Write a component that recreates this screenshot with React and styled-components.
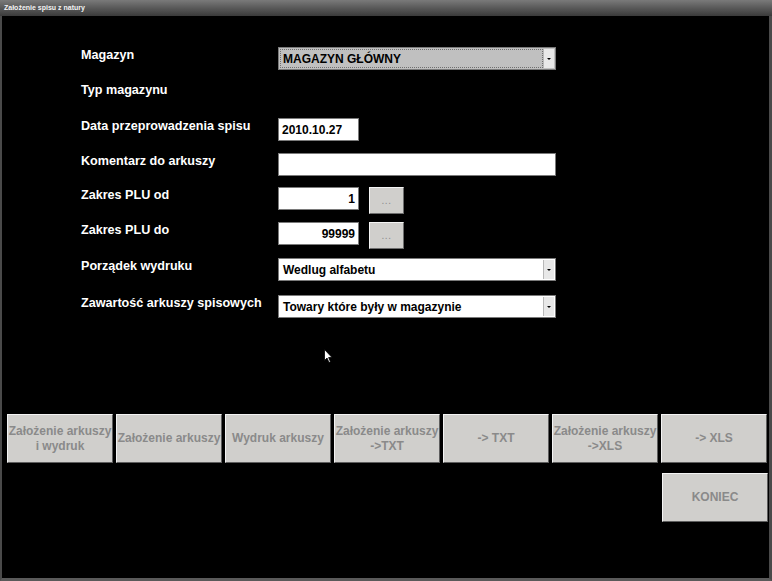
import React from "react";
import styled, { createGlobalStyle } from "styled-components";

const Global = createGlobalStyle`
  html, body { margin: 0; padding: 0; background: #000; }
  body { font-family: "Liberation Sans", Arial, sans-serif; }
  * { box-sizing: border-box; }
`;

const Window = styled.div`
  position: relative;
  width: 772px;
  height: 581px;
  background: #000;
  border-left: 2px solid #4a4a4a;
  border-right: 3px solid #4a4a4a;
  border-bottom: 3px solid #5a5a5a;
  display: flex;
  flex-direction: column;
`;

const TitleBar = styled.div`
  height: 16px;
  margin: 0 -3px 0 -2px;
  background: linear-gradient(#7a7a7a 0%, #5c5c5c 45%, #3a3a3a 100%);
  color: #f4f4f4;
  font-family: "Liberation Sans", Arial, sans-serif;
  font-weight: bold;
  font-size: 7px;
  line-height: 16px;
  padding-left: 4px;
  white-space: nowrap;
`;

const Body = styled.div`
  flex: 1;
  display: flex;
  flex-direction: column;
  padding: 31px 1px 0 5px;
`;

const Form = styled.div`
  display: flex;
  flex-direction: column;
  padding-left: 74px;
`;

const Row = styled.div`
  display: flex;
  align-items: flex-start;
  height: ${(p) => p.h}px;
`;

const Label = styled.div`
  width: 197px;
  padding-top: 1px;
  color: #fff;
  font-weight: bold;
  font-size: 12.6px;
  line-height: 15px;
`;

const field = `
  height: 23px;
  border: 1px solid #7a7a7a;
  font-weight: bold;
  font-size: 12px;
  color: #000;
  display: flex;
  align-items: center;
`;

const TextBox = styled.div`
  ${field}
  width: ${(p) => p.w}px;
  background: #fff;
  padding: 0 3px;
  justify-content: ${(p) => (p.right ? "flex-end" : "flex-start")};
`;

const Select = styled.div`
  ${field}
  width: 278px;
  background: ${(p) => (p.focused ? "#c0c0c0" : "#fff")};
  padding: 1px;
`;

const SelectText = styled.div`
  flex: 1;
  height: 100%;
  display: flex;
  align-items: center;
  padding-left: 2px;
  border: 1px ${(p) => (p.focused ? "dotted #707070" : "solid transparent")};
`;

const ArrowBtn = styled.div`
  width: 11px;
  height: 100%;
  background: #e8e8e8;
  border-left: 1px solid #b8b8b8;
  display: flex;
  align-items: center;
  justify-content: center;
  &::after {
    content: "";
    border-left: 2px solid transparent;
    border-right: 2px solid transparent;
    border-top: 2px solid #000;
  }
`;

const DotsBtn = styled.div`
  width: 35px;
  height: 27px;
  margin-left: 10px;
  background: #d0cfcc;
  border: 1px solid;
  border-color: #f4f4f4 #6e6e6e #6e6e6e #f4f4f4;
  color: #8c8c8c;
  font-size: 10px;
  letter-spacing: 0.5px;
  display: flex;
  align-items: center;
  justify-content: center;
`;

const ActionRow = styled.div`
  margin-top: 96px;
  display: flex;
  gap: 3px;
`;

const ActionBtn = styled.div`
  width: 106px;
  height: 49px;
  background: #d0cfcc;
  border: 1px solid;
  border-color: #f4f4f4 #5e5e5e #5e5e5e #f4f4f4;
  color: #8a8a8a;
  font-weight: bold;
  font-size: 12px;
  line-height: 15px;
  text-align: center;
  display: flex;
  align-items: center;
  justify-content: center;
  white-space: pre-line;
`;

const EndRow = styled.div`
  margin-top: 10px;
  display: flex;
  justify-content: flex-end;
`;

const Cursor = styled.svg`
  position: absolute;
  left: 322px;
  top: 349px;
`;

const buttons = [
  "Założenie arkuszy\ni wydruk",
  "Założenie arkuszy",
  "Wydruk arkuszy",
  "Założenie arkuszy\n->TXT",
  "-> TXT",
  "Założenie arkuszy\n->XLS",
  "-> XLS",
];

export default function App() {
  return (
    <>
      <Global />
      <Window>
        <TitleBar>Założenie spisu z natury</TitleBar>
        <Body>
          <Form>
            <Row h={35}>
              <Label>Magazyn</Label>
              <Select focused>
                <SelectText focused>MAGAZYN GŁÓWNY</SelectText>
                <ArrowBtn />
              </Select>
            </Row>
            <Row h={36}>
              <Label>Typ magazynu</Label>
            </Row>
            <Row h={35}>
              <Label>Data przeprowadzenia spisu</Label>
              <TextBox w={81}>2010.10.27</TextBox>
            </Row>
            <Row h={34}>
              <Label>Komentarz do arkuszy</Label>
              <TextBox w={278} />
            </Row>
            <Row h={35}>
              <Label>Zakres PLU od</Label>
              <TextBox w={81} right>1</TextBox>
              <DotsBtn>...</DotsBtn>
            </Row>
            <Row h={36}>
              <Label>Zakres PLU do</Label>
              <TextBox w={81} right>99999</TextBox>
              <DotsBtn>...</DotsBtn>
            </Row>
            <Row h={37}>
              <Label>Porządek wydruku</Label>
              <Select>
                <SelectText>Wedlug alfabetu</SelectText>
                <ArrowBtn />
              </Select>
            </Row>
            <Row h={23}>
              <Label>Zawartość arkuszy spisowych</Label>
              <Select>
                <SelectText>Towary które były w magazynie</SelectText>
                <ArrowBtn />
              </Select>
            </Row>
          </Form>
          <ActionRow>
            {buttons.map((b) => (
              <ActionBtn key={b}>{b}</ActionBtn>
            ))}
          </ActionRow>
          <EndRow>
            <ActionBtn>KONIEC</ActionBtn>
          </EndRow>
        </Body>
        <Cursor width="10" height="15" viewBox="0 0 10 15">
          <path d="M0.5 0.5 L0.5 11.5 L3 9 L5 13.5 L6.5 12.8 L4.6 8.5 L8 8.5 Z" fill="#fff" stroke="#000" strokeWidth="0.8" />
        </Cursor>
      </Window>
    </>
  );
}
